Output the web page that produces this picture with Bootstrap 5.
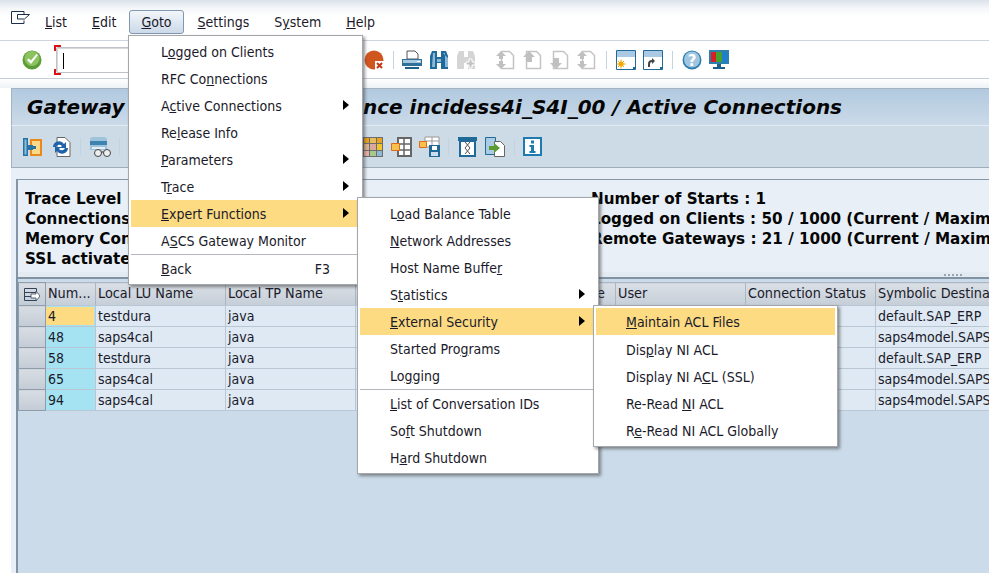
<!DOCTYPE html>
<html lang="en"><head><meta charset="utf-8"><title>Gateway Monitor</title>
<link href="https://cdn.jsdelivr.net/npm/bootstrap@5.3.0/dist/css/bootstrap.min.css" rel="stylesheet">
<style>
html,body{margin:0;height:573px;width:989px;overflow:hidden}
body{background:#fff;font-family:"DejaVu Sans Condensed","DejaVu Sans",sans-serif;font-size:14px;color:#1a1a2a;position:relative}
.sap-menubar{height:40px;background:linear-gradient(#dbe2ea 0,#f4f6f9 8px,#fff 16px);padding-left:11px}
.sap-top{height:24px;line-height:23px;padding:0 10px;margin-top:10px;margin-right:3px;border:1px solid transparent;white-space:nowrap}
.sap-top.on{background:linear-gradient(#f3f6fa,#cbd9e8);border-color:#8197b0;border-radius:3px;margin-left:-1px;padding:0 11px}
.sap-tool{height:39px;background:#fff;border-top:1px solid #ccd4df;border-bottom:1px solid #c3cddb;padding-left:22px}
.sap-ic{flex:none;display:block}
.sap-sep{width:1px;height:18px;background:#c3d3e2;flex:none}
.sap-cmd{width:74px;height:26px;margin-left:14px;border:1px solid #bfc3c9;border-radius:2px;box-shadow:inset 1px 1px 0 #d8d8d8;position:relative;flex:none;margin-right:234px;background:#fff}
.sap-cmd::before{content:"";position:absolute;left:6px;top:5px;width:1px;height:16px;background:#000}
.sap-cmd i{position:absolute;left:-3px;width:7px;height:6px;border-left:2px solid #e01010}
.sap-cmd i.t{top:-3px;border-top:2px solid #e01010}.sap-cmd i.b{bottom:-3px;border-bottom:2px solid #e01010}
.sap-gap{height:9px;background:linear-gradient(#fff,#eef2f7)}
.sap-frame{margin-left:11px;border-top:1px solid #a4b3c2}
.sap-title{height:37px;background:linear-gradient(#b1c9df,#cbdae8);font:italic 700 20px/36px "DejaVu Sans",sans-serif;color:#050505;padding-left:15px;white-space:nowrap;border-bottom:1px solid #e4ecf3;border-left:1px solid #a4b3c2}
.sap-hid{display:inline-block;width:336px;overflow:hidden;vertical-align:top}
.sap-tb2{height:42px;background:#cddbe7;padding-left:11px;border-bottom:1px solid #9eadbc;border-left:1px solid #a4b3c2}
.sap-body{padding:11px 0 0 5px;background:#e9eff7;height:410px}
.sap-info{height:93px;background:#e8eff6;border:1px solid #8496a6;border-width:1px 0 0 2px;padding:9px 0 0 7px;font:700 15.2px/20px "DejaVu Sans",sans-serif;color:#050505;white-space:nowrap}
.sap-il{width:566px;overflow:hidden;flex:none}
.sap-split{height:5px;background:#e3eaf2;border-left:2px solid #8496a6}
.sap-wrap{background:#cbdbe9;border:1px solid #7f93a2;border-width:2px 0 0 2px;padding-top:3px;height:300px}
table.sap-grid{border-collapse:collapse;table-layout:fixed;width:1150px;margin:0;background:transparent;font-size:14px;color:#1a1a2a}
.sap-grid th,.sap-grid td{border:1px solid #b9c6d4;padding:1px 0 0 2px;height:21px;line-height:19px;white-space:nowrap;overflow:hidden;font-weight:400;background:#dee9f3;box-shadow:none;color:#1a1a2a;vertical-align:middle}
.sap-grid th{height:23px;padding:0 0 2px 2px;font-size:14.3px;background:linear-gradient(#dadfe5,#c5ced8);border-color:#aab6c3 #aab6c3 #b9c6d4}
.sap-grid th.sap-r{padding-right:10px;text-align:right}
.sap-grid th.s,.sap-grid td.s{background:linear-gradient(#d8dde3,#c3ccd6);border:1px solid #8f9daa;padding:0}
.sap-grid td.k{background:#a5e3f3}
.sap-grid td.y{background:#a5e3f3;padding:0}
.sap-grid td.y b{display:block;font-weight:400;background:#fcdb82;margin:1px 1px 1px 0;padding-left:2px;line-height:18px}
.sap-menu{position:absolute;display:block;margin:0;padding:2px 2px;border:1px solid #a3a7ab;border-radius:0;background:#fff;box-shadow:2px 2px 3px rgba(60,60,60,.55);font-size:14px;min-width:0;z-index:5}
.sap-menu .dropdown-item{height:27px;line-height:28px;padding:0 0 0 30px;color:#1a1a2a;position:relative;white-space:nowrap;background:transparent}
.sap-menu .dropdown-item.hot{background:#fcdb82}
.sap-menu .dropdown-item.ar::after{content:"";position:absolute;right:11px;top:8px;border-left:6px solid #000;border-top:5.5px solid transparent;border-bottom:5.5px solid transparent}
.sap-menu hr{margin:0;border:0;border-top:1px solid #b4b8bc;opacity:1}
.sap-f3{position:absolute;right:30px;top:0}
.sap-m1{left:128px;top:35px;width:235px}
.sap-m2{left:357px;top:197px;width:242px;z-index:6}
.sap-m3{left:593px;top:305px;width:245px;z-index:7}
.sap-m3 .hot{margin-bottom:1px}
.sap-dots{position:absolute;left:944px;top:274px;width:19px;height:2px;background:repeating-linear-gradient(90deg,#98a6b4 0 2px,transparent 2px 4px)}
</style></head><body>

<div class="sap-menubar d-flex align-items-start">
<svg class="sap-ic" style="margin-top:11px;margin-right:4px" width="19" height="14" viewBox="0 0 19 14"><path d="M13 .5H.5v12H13M13 .5v3M13 12.500v-3M6.500 3.500h12l-5 4.500H6.500z" fill="none" stroke="#1d2f45"/></svg>
<span class="sap-top"><u>L</u>ist</span><span class="sap-top"><u>E</u>dit</span><span class="sap-top on"><u>G</u>oto</span><span class="sap-top"><u>S</u>ettings</span><span class="sap-top">S<u>y</u>stem</span><span class="sap-top"><u>H</u>elp</span>
</div>

<div class="sap-tool d-flex align-items-center">
<svg class="sap-ic" width="20" height="20" viewBox="0 0 20 20"><circle cx="10" cy="10" r="9.500" fill="#5d9d37"/><circle cx="10" cy="8.500" r="7.500" fill="#8cc35f"/><path d="M5 10l4 4 7-9-1.500-1L9 10.500 6.500 8.500z" fill="#fff"/></svg>
<div class="sap-cmd"><i class="t"></i><i class="b"></i></div>
<svg class="sap-ic" width="21" height="20" viewBox="0 0 21 20"><circle cx="10" cy="10" r="9.500" fill="#d0561f"/><path fill="#fff" d="M11 11h10v9H11z"/><path d="M13 13l5 5m0-5l-5 5" stroke="#c43a16" stroke-width="2"/></svg>
<span class="sap-sep" style="margin:0 8px"></span>
<svg class="sap-ic" width="20" height="20" viewBox="0 0 20 20"><path d="M5 1h8l3 3v5H5z" fill="#fff" stroke="#555"/><path d="M0 9h20v7H0z" fill="#2e7099"/><path d="M1 10h18v3H1z" fill="#a8c8e0"/><path d="M3 17h14v2H3z" fill="#1d5f88"/><path d="M15 11h3v1h-3z" fill="#fff"/></svg>
<svg class="sap-ic" style="margin-left:8px" width="18" height="20" viewBox="0 0 18 20"><path d="M2 1h5v18H0V6zM11 1h5l2 5v13h-7zM7 7h4v6H7z" fill="#1f6a99"/><path d="M3 3h2v14H2zM13 3h2v14h3v-9z" fill="#8db9d8"/><path d="M7 9h4v3H7z" fill="#8db9d8"/></svg>
<svg class="sap-ic" style="margin-left:9px" width="18" height="20" viewBox="0 0 18 20"><path d="M2 1h5v18H0V6zM11 1h5l2 5v13h-7zM7 7h4v6H7z" fill="#d5d5d5"/><path d="M12 9h3v3h3v3h-3v3h-3v-3H9v-3h3z" fill="#c4c4c4" stroke="#fff"/></svg>
<svg class="sap-ic" style="margin-left:20px" width="20" height="20" viewBox="0 0 20 20"><path d="M6.500 1.500h8l4 4v13h-12z" fill="#fff" stroke="#c4c4c4" stroke-width="1.500"/><path d="M6 1L1 6h3v3h4V6h3zM6 19L1 14h3v-3h4v3h3z" fill="#c0c0c0"/></svg>
<svg class="sap-ic" style="margin-left:7px" width="20" height="20" viewBox="0 0 20 20"><path d="M4.500 1.500h10l4 4v13h-14z" fill="#fff" stroke="#c4c4c4" stroke-width="1.500"/><path d="M7 1L1 7h3v5h6V7h3z" fill="#c0c0c0"/></svg>
<svg class="sap-ic" style="margin-left:7px" width="20" height="20" viewBox="0 0 20 20"><path d="M4.500 1.500h10l4 4v13h-14z" fill="#fff" stroke="#c4c4c4" stroke-width="1.500"/><path d="M7 19L1 13h3V8h6v5h3z" fill="#c0c0c0"/></svg>
<svg class="sap-ic" style="margin-left:7px" width="20" height="20" viewBox="0 0 20 20"><path d="M6.500 1.500h8l4 4v13h-12z" fill="#fff" stroke="#c4c4c4" stroke-width="1.500"/><path d="M6 1L1 6h3v3h4V6h3zM6 19L1 14h3v-3h4v3h3z" fill="#c0c0c0"/></svg>
<span class="sap-sep" style="margin:0 9px 0 10px"></span>
<svg class="sap-ic" width="20" height="20" viewBox="0 0 20 20"><path d="M.5.500h19v19H.5z" fill="#fff" stroke="#1f6a99"/><path d="M1 1h18v6H1z" fill="#a9c9e4"/><circle cx="5" cy="14" r="2.500" fill="#f5a800"/><path d="M5 9.500v9M.5 14h9M2 11l6 6M8 11l-6 6" stroke="#f5a800"/><path d="M17 17h2v2h-2z" fill="#1f6a99"/></svg>
<svg class="sap-ic" style="margin-left:7px" width="20" height="20" viewBox="0 0 20 20"><path d="M.5.500h19v19H.5z" fill="#fff" stroke="#1f6a99"/><path d="M1 1h18v6H1z" fill="#a9c9e4"/><path d="M6 17v-3q0-3 3-3" fill="none" stroke="#444" stroke-width="2"/><path d="M9 8l3 3-3 3z" fill="#444"/><path d="M17 17h2v2h-2z" fill="#1f6a99"/></svg>
<span class="sap-sep" style="margin:0 9px"></span>
<svg class="sap-ic" width="20" height="20" viewBox="0 0 20 20"><circle cx="10" cy="10" r="9.500" fill="#2d7fb0"/><circle cx="10" cy="9.500" r="8" fill="#a0c5e0"/><text x="10" y="15.500" font-family="'DejaVu Sans'" font-weight="700" font-size="15" text-anchor="middle" fill="#fff">?</text></svg>
<svg class="sap-ic" style="margin-left:7px" width="20" height="20" viewBox="0 0 20 20"><path d="M0 0h20v14H0z" fill="#2d7fb0"/><path d="M2 2h5v10H2z" fill="#d81f26"/><path d="M7 2h6v10H7z" fill="#4aa02c"/><path d="M13 2h5v10h-5z" fill="#1f7fcf"/><path d="M8 14h4v3H8zM4 17h12v2H4z" fill="#1d5f88"/></svg>
</div>

<div class="sap-gap"></div>
<div class="sap-frame">
<div class="sap-title"><span class="sap-hid">Gateway Monitor: Insta</span>nce incidess4i_S4I_00 / Active Connections</div>
<div class="sap-tb2 d-flex align-items-center">
<svg class="sap-ic" width="19" height="20" viewBox="0 0 19 20"><path d="M7 2h12v17H7z" fill="#e8891c"/><path d="M9 4h8v13H9z" fill="#fcd98a"/><path d="M0 1h5v18H0z" fill="#2773a4"/><path d="M1.500 2.500h2v15h-2z" fill="#8dbbdc"/><path d="M5 8h5v1h3v3h-3v1H5z" fill="#2773a4"/></svg>
<svg class="sap-ic" style="margin-left:9px" width="20" height="20" viewBox="0 0 20 20"><path d="M6 .5h8l5 5v14H6z" fill="#fff" stroke="#666"/><path d="M2 10a6 6 0 0 1 11-3l2-2v6H9l2-2a3.500 3.500 0 0 0-6 1zM17 11a6 6 0 0 1-11 3l-2 2v-6h6l-2 2a3.500 3.500 0 0 0 6-1z" fill="#1f63a8"/></svg>
<span class="sap-sep" style="margin:0 9px"></span>
<svg class="sap-ic" width="21" height="20" viewBox="0 0 21 20"><path d="M0 3q0-3 3-3h11q3 0 3 3v10H0z" fill="#a0c3dc"/><path d="M0 4h17v4H0z" fill="#3e84b0"/><path d="M2 10h13v2H2z" fill="#e7eef5"/><circle cx="8" cy="16" r="3.500" fill="#eee" stroke="#444"/><circle cx="17" cy="16" r="3.500" fill="#eee" stroke="#444"/><path d="M11 15h3" stroke="#444"/></svg>
<span class="sap-sep" style="margin:0 8px 0 8px"></span>
<span style="width:235px" class="flex-none"></span>
<svg class="sap-ic" width="20" height="20" viewBox="0 0 20 20"><path d="M0 0h20v20H0z" fill="#6c6c6c"/><path d="M1 1h5v5H1z" fill="#eba21c"/><path d="M7 1h6v5H7z" fill="#e9bb5c"/><path d="M14 1h5v5h-5z" fill="#eba21c"/><path d="M1 7h5v6H1z" fill="#dfb48a"/><path d="M7 7h6v6H7z" fill="#d9a9a0"/><path d="M14 7h5v6h-5z" fill="#f4c52a"/><path d="M1 14h5v5H1z" fill="#e9b0a8"/><path d="M7 14h6v5H7z" fill="#a8c88a"/><path d="M14 14h5v5h-5z" fill="#8fb8d8"/></svg>
<svg class="sap-ic" style="margin-left:8px" width="21" height="20" viewBox="0 0 21 20"><path d="M7 1h13v18H7z" fill="#fff" stroke="#666" stroke-width="2"/><path d="M7 7h13M7 13h13M13 1v18" stroke="#666" stroke-width="1.500"/><path d="M.5 6.500h8v7h-8z" fill="#f6c14c" stroke="#e06a1c"/></svg>
<svg class="sap-ic" style="margin-left:7px" width="21" height="21" viewBox="0 0 21 21"><path d="M6 1h14v10H6z" fill="#fff" stroke="#999"/><path d="M6 5h14M13 1v10" stroke="#999"/><path d="M.5 5.500h7v6h-7z" fill="#f6c14c" stroke="#e06a1c"/><path d="M10 9h11v12H10z" fill="#1f6a99"/><path d="M13 10h5v4h-5z" fill="#fff"/><path d="M12 16h7v4h-7z" fill="#cde"/></svg>
<span class="sap-sep" style="margin:0 8px"></span>
<svg class="sap-ic" style="margin-left:1px" width="19" height="20" viewBox="0 0 19 20"><path d="M0 0h19v4H0z" fill="#1f6a99"/><path d="M2 4h15v15H2z" fill="#fff" stroke="#1f6a99" stroke-width="2"/><path d="M7 5l5 6-5 6M12 5l-5 6 5 6" fill="none" stroke="#555"/></svg>
<svg class="sap-ic" style="margin-left:8px" width="20" height="20" viewBox="0 0 20 20"><path d="M.5.500h10v17H.5z" fill="#a9cbe4" stroke="#1f6a99"/><path d="M9.500 4.500h6l4 4v11h-10z" fill="#fff" stroke="#666"/><path d="M4 9h5V6l6 5-6 5v-3H4z" fill="#5c9a33"/></svg>
<span class="sap-sep" style="margin:0 8px 0 9px"></span>
<svg class="sap-ic" width="19" height="19" viewBox="0 0 19 19"><path d="M1 1h17v17H1z" fill="#fff" stroke="#1f7ab0" stroke-width="2"/><path d="M8 3.500h3v3H8zM6.500 8H11v6h1.500v2h-6v-2H8v-4H6.500z" fill="#1f7ab0"/></svg>
</div>
<div class="sap-body">
<div class="sap-info d-flex">
<div class="sap-il">Trace Level : 1<br>Connections : 5 / 2000 (Current / Maximum)<br>Memory Consumption : 1 MB<br>SSL activated : No</div>
<div>Number of Starts : 1<br>Logged on Clients : 50 / 1000 (Current / Maximum)<br>Remote Gateways : 21 / 1000 (Current / Maximum)</div>
</div>
<div class="sap-split"></div>
<div class="sap-wrap">
<table class="table sap-grid">
<colgroup><col style="width:27px"><col style="width:50px"><col style="width:130px"><col style="width:130px"><col style="width:130px"><col style="width:130px"><col style="width:130px"><col style="width:130px"><col style="width:293px"></colgroup>
<thead><tr><th class="s text-center"><svg width="16" height="14" viewBox="0 0 16 14"><path d="M.5.500h12v12H.5zM.5 4.500h12M.5 8.500h12" fill="none" stroke="#33445a"/><path d="M7 6h5V3l4 5-4 5v-3H7z" fill="#fff" stroke="#33445a" stroke-width=".8"/></svg></th><th>Num...</th><th>Local LU Name</th><th>Local TP Name</th><th>Remote LU Name</th><th class="sap-r">Remote TP Name</th><th>User</th><th>Connection Status</th><th>Symbolic Destination</th></tr></thead>
<tbody>
<tr><td class="s"></td><td class="y"><b>4</b></td><td>testdura</td><td>java</td><td></td><td></td><td></td><td></td><td>default.SAP_ERP</td></tr>
<tr><td class="s"></td><td class="k">48</td><td>saps4cal</td><td>java</td><td></td><td></td><td></td><td></td><td>saps4model.SAPS4</td></tr>
<tr><td class="s"></td><td class="k">58</td><td>testdura</td><td>java</td><td></td><td></td><td></td><td></td><td>default.SAP_ERP</td></tr>
<tr><td class="s"></td><td class="k">65</td><td>saps4cal</td><td>java</td><td></td><td></td><td></td><td></td><td>saps4model.SAPS4</td></tr>
<tr><td class="s"></td><td class="k">94</td><td>saps4cal</td><td>java</td><td></td><td></td><td></td><td></td><td>saps4model.SAPS4</td></tr>
</tbody></table>
</div>
</div>
</div>
<div class="sap-dots"></div>

<div class="dropdown-menu show sap-menu sap-m1">
<span class="dropdown-item">L<u>o</u>gged on Clients</span>
<span class="dropdown-item">RFC Co<u>n</u>nections</span>
<span class="dropdown-item ar">A<u>c</u>tive Connections</span>
<span class="dropdown-item">Re<u>l</u>ease Info</span>
<span class="dropdown-item ar"><u>P</u>arameters</span>
<span class="dropdown-item ar">T<u>r</u>ace</span>
<span class="dropdown-item ar hot"><u>E</u>xpert Functions</span>
<span class="dropdown-item">A<u>S</u>CS Gateway Monitor</span>
<hr>
<span class="dropdown-item"><u>B</u>ack<span class="sap-f3">F3</span></span>
</div>
<div class="dropdown-menu show sap-menu sap-m2">
<span class="dropdown-item">L<u>o</u>ad Balance Table</span>
<span class="dropdown-item"><u>N</u>etwork Addresses</span>
<span class="dropdown-item">Host Name Buffe<u>r</u></span>
<span class="dropdown-item ar">S<u>t</u>atistics</span>
<span class="dropdown-item ar hot"><u>E</u>xternal Security</span>
<span class="dropdown-item">Started Pro<u>g</u>rams</span>
<span class="dropdown-item">Lo<u>g</u>ging</span>
<hr>
<span class="dropdown-item"><u>L</u>ist of Conversation IDs</span>
<span class="dropdown-item">So<u>f</u>t Shutdown</span>
<span class="dropdown-item">H<u>a</u>rd Shutdown</span>
</div>
<div class="dropdown-menu show sap-menu sap-m3">
<span class="dropdown-item hot"><u>M</u>aintain ACL Files</span>
<span class="dropdown-item">Dis<u>p</u>lay NI ACL</span>
<span class="dropdown-item">Display NI A<u>C</u>L (SSL)</span>
<span class="dropdown-item">Re-Read <u>N</u>I ACL</span>
<span class="dropdown-item">R<u>e</u>-Read NI ACL Globally</span>
</div>
<script src="https://cdn.jsdelivr.net/npm/bootstrap@5.3.0/dist/js/bootstrap.bundle.min.js"></script>
</body></html>
